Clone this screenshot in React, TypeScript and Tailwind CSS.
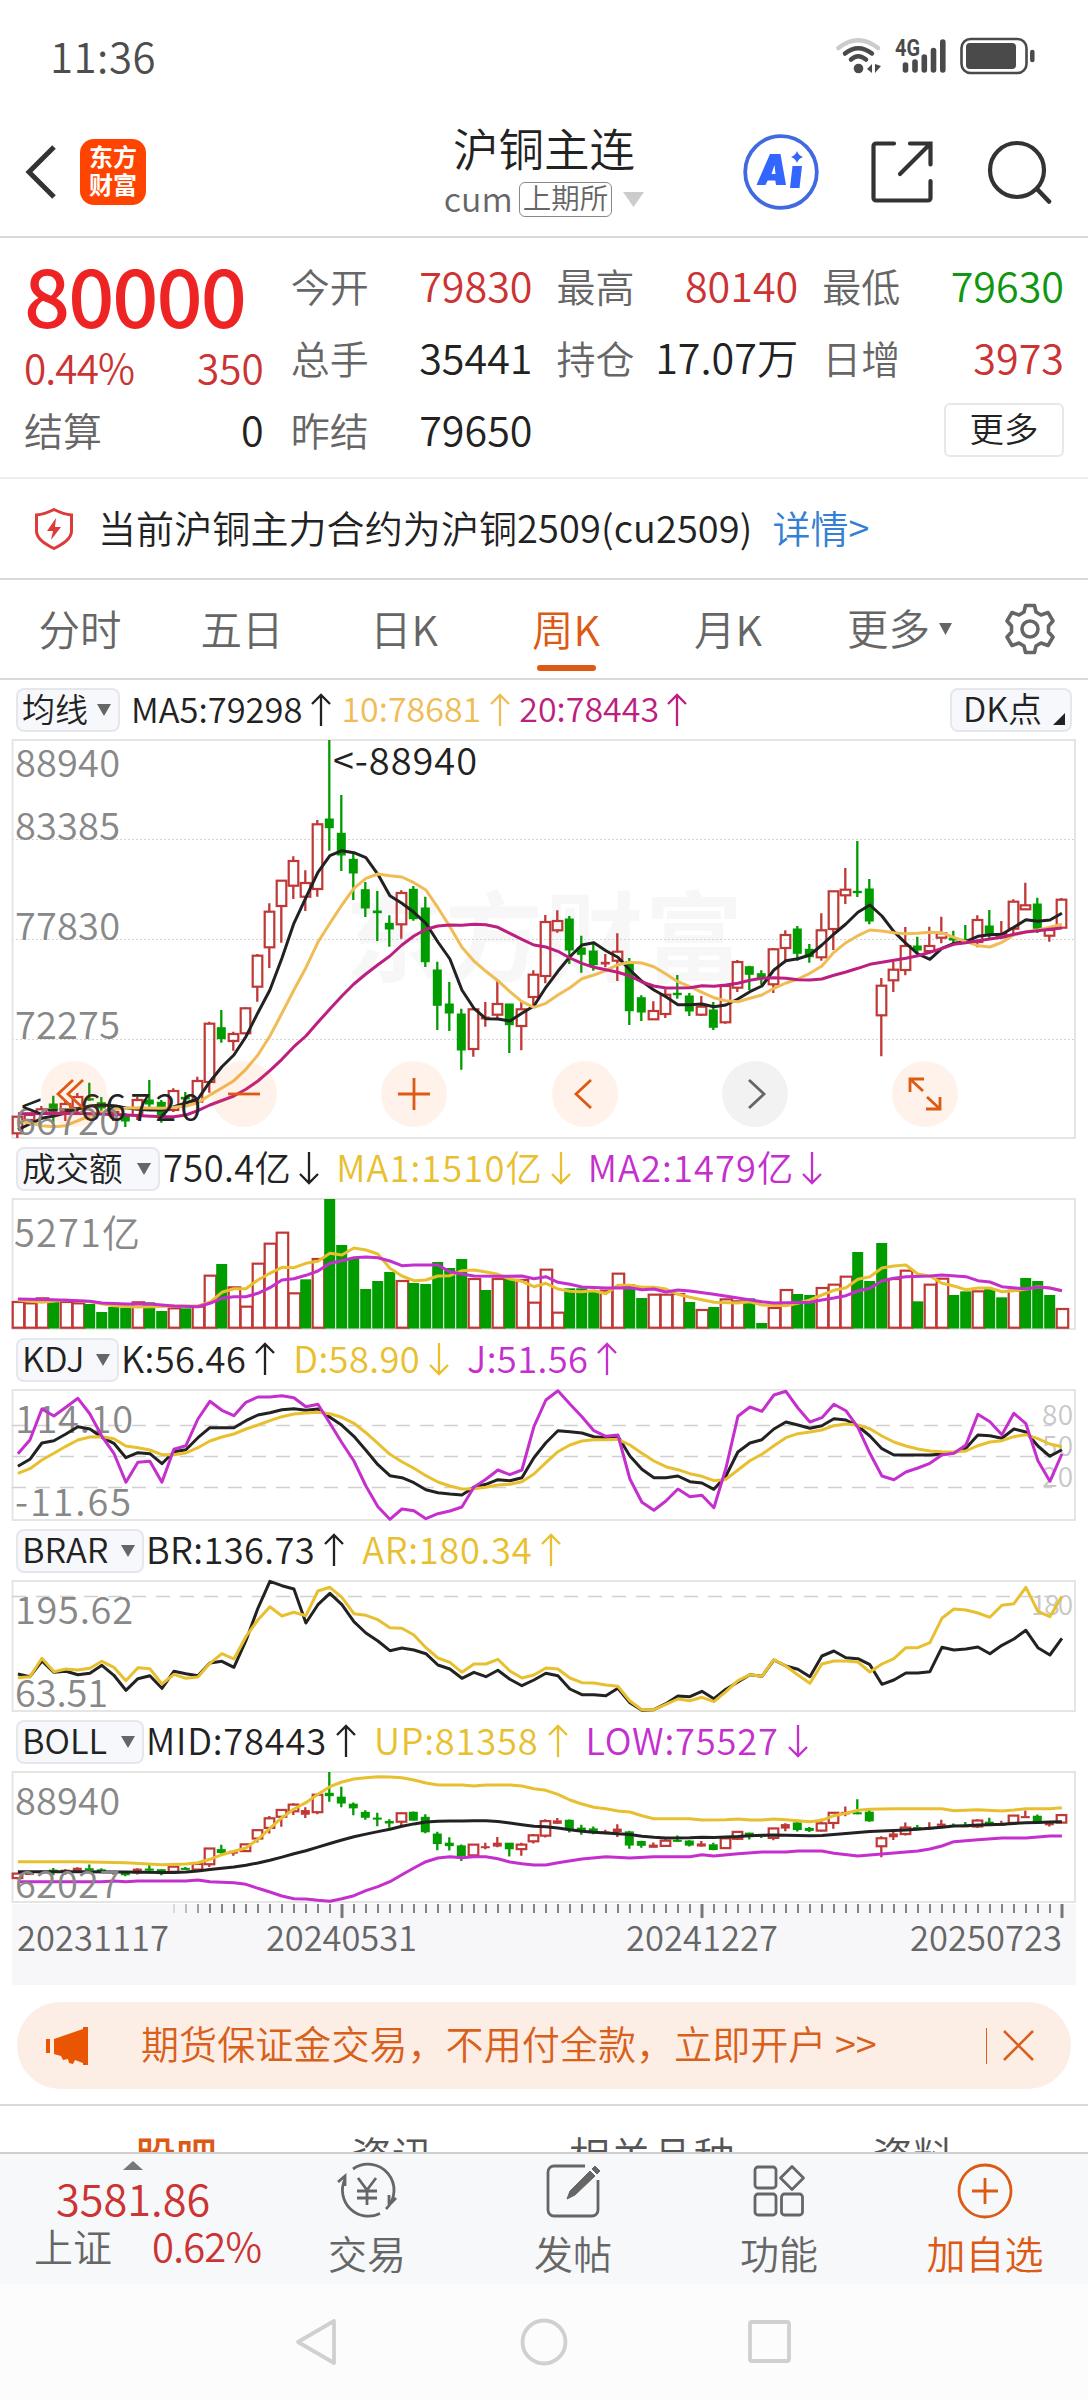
import type { ReactNode } from "react";

type Candle = [dir: "r" | "g", top: number, bottom: number, high: number, low: number];
type Series = number[] | [number, number][];

const RED = "#bf3836";
const GREEN = "#009c00";
const BLACK = "#222222";
const YELLOW = "#e8c02f";
const PURPLE = "#c42fce";
const FONT = '"Noto Sans CJK SC", sans-serif';

// offsets in px from the top of the K line panel
const candles: Candle[] = [
  ["r", 376.7, 393.3, 376, 398], ["r", 375, 380, 373, 382], ["r", 369.3, 373.3, 366, 377], ["g", 364, 371, 355.7, 383],
  ["r", 364, 371, 360, 381], ["r", 357, 368, 353, 373], ["g", 358.7, 360, 342.7, 361], ["g", 362.7, 368, 357, 373],
  ["r", 372, 375, 368, 381], ["g", 375, 381, 373, 387], ["r", 360, 375, 356.7, 380], ["g", 360, 364, 340, 370],
  ["g", 362.3, 376.7, 360, 382.7], ["r", 351, 370, 348.3, 372], ["g", 357.3, 359, 352, 362], ["r", 341, 361.7, 336.7, 364],
  ["r", 283.7, 342, 281.7, 352.7], ["g", 287.7, 298.7, 270, 302.7], ["r", 294, 301, 291.7, 310.7], ["r", 268.3, 293.3, 267.5, 294],
  ["r", 215.7, 246.7, 214, 261.7], ["r", 171.7, 207.3, 163.3, 228], ["r", 140.7, 166, 140, 202.7], ["r", 121, 145.7, 116.3, 159],
  ["r", 143, 156.7, 130.3, 171], ["r", 84.3, 149, 80, 156.7], ["g", 79, 87.7, 0, 110.7], ["g", 93.3, 115, 55, 131],
  ["g", 119.3, 133, 113.3, 160], ["g", 149.7, 168, 142, 177], ["g", 171, 172.7, 151, 201], ["g", 183.3, 189, 175.3, 206.7],
  ["r", 153, 184.3, 150.3, 198.7], ["g", 149.3, 178.7, 146, 180.7], ["g", 168, 221.7, 156.7, 227], ["g", 230, 265.3, 221.7, 290],
  ["g", 264, 273, 242, 291], ["g", 274, 310, 268.7, 329.7], ["r", 269.3, 309, 268, 316.7], ["r", 277, 279, 262, 286.7],
  ["r", 264, 274.7, 240.7, 278.7], ["g", 264, 284.7, 264, 313], ["r", 269.3, 286, 262, 310.3], ["r", 234.7, 257, 230.3, 265.3],
  ["r", 182, 236, 175, 243.3], ["r", 181, 190.3, 170.3, 192.7], ["g", 179, 210, 176, 224], ["g", 208, 214.3, 195.7, 232.7],
  ["g", 211, 224.7, 201.7, 230.7], ["r", 222.3, 224, 214, 227.3], ["r", 211.7, 220.7, 193.3, 241], ["g", 222, 270.7, 218, 285],
  ["g", 257.7, 272, 255.3, 281], ["r", 271, 279.3, 261.3, 280], ["r", 254.7, 274, 249.3, 278], ["g", 253.3, 254.7, 235, 258.7],
  ["g", 256, 271, 253, 276], ["r", 266.7, 274.7, 256, 276], ["g", 270, 287.3, 262, 290], ["r", 246, 282.3, 245, 283.7],
  ["r", 222, 247.7, 220, 252], ["g", 226.7, 234.3, 225.7, 250], ["g", 233.7, 238.3, 230.3, 244.7], ["r", 209.3, 244.3, 208, 253],
  ["r", 195, 208, 190.3, 220], ["g", 189, 213.3, 186, 220.7], ["g", 209.3, 216.7, 204, 222.7], ["r", 190.3, 217.3, 173.3, 220.7],
  ["r", 151.3, 189, 151, 210], ["r", 149.7, 155.3, 128, 164], ["g", 151.3, 152.7, 101, 157], ["g", 149, 181, 139, 184.3],
  ["r", 245.7, 275.3, 238, 316.3], ["r", 229.7, 240.3, 221.7, 252], ["r", 206, 230, 187, 235.3], ["g", 206, 210, 196.7, 215],
  ["r", 206, 211, 186.7, 214], ["r", 193.3, 197.7, 176.7, 203.3], ["g", 198, 200, 190.7, 203], ["g", 199.3, 200.7, 185, 203],
  ["r", 180, 202, 175.3, 207.3], ["g", 186, 195, 170, 198], ["r", 194, 197.3, 181, 199], ["r", 161.7, 188.7, 159.3, 195.3],
  ["r", 165.3, 169.3, 142.7, 170], ["g", 164, 188.3, 157.7, 193], ["r", 190, 195.7, 189, 201.7], ["r", 159.7, 187.7, 158, 188],
];

const ma5: Series = [
  389.7, 384, 378.3, 376, 373, 369, 366, 365, 365.7, 368, 369.3, 370, 370, 366.7, 363, 359, 341.7, 326.7, 315, 296.7, 272.7, 250,
  218.3, 183.3, 157.7, 132.3, 115.7, 110.7, 112.7, 117.7, 134.3, 155.7, 163.3, 172.3, 183.3, 202, 219, 250, 268.3, 278.7, 279, 281,
  273.3, 266, 247.3, 231.3, 216.7, 205, 202.7, 210.7, 217.3, 230, 241.3, 250, 256.7, 264.7, 264.7, 264, 266.7, 265, 259, 251.7,
  246, 230, 220.7, 218.7, 215, 205, 194, 184, 172.3, 165, 176, 191.7, 203.3, 214, 219.3, 208.3, 203.3, 201.7, 196.3, 194.7, 194.3,
  187.3, 179.7, 181.3, 180, 173.3,
];

const ma10: Series = [
  381, 383, 385.7, 386.7, 385.7, 380.7, 376, 371.7, 369.3, 368.3, 367.7, 368, 368.3, 367.3, 366, 362.7, 355, 348, 340.7, 329.3, 315,
  296, 273.3, 250, 227.7, 202.3, 183.3, 165, 148.3, 138.3, 134, 135.7, 137, 142.7, 150, 167.7, 186.7, 207.3, 221, 231.3, 240.7,
  251.7, 261.7, 267.3, 263.3, 255, 247.7, 238.7, 235, 230.7, 224.7, 222.3, 223, 226.7, 234, 241.7, 246.7, 252.3, 257.7, 260.7,
  261.7, 258.3, 255, 248.3, 243, 239, 233.3, 226, 212.3, 202.7, 195.7, 190, 191, 192.7, 193.7, 193.3, 192.3, 192.7, 197.3, 201.7,
  205.7, 207, 202.3, 195, 191.7, 190, 187.3, 184.3,
];

const ma20: [number, number][] = [
  [0, 373.7], [5, 373.3], [9, 375], [12, 376.7], [13, 376.7], [14, 375], [15, 370.7], [16, 365], [18, 356], [19, 349.3], [20, 341],
  [21, 330.7], [22, 319.3], [23, 306.7], [24, 296], [25, 282.3], [26, 269], [27, 256], [28, 244], [29, 234], [30, 224.7], [31, 216],
  [32, 205], [33, 196], [34, 189.3], [35, 186], [36, 185], [37, 185.3], [38, 184.3], [39, 184.7], [40, 187.3], [41, 193.3],
  [42, 199.3], [43, 205], [44, 207], [45, 211.3], [46, 218], [47, 223.3], [48, 227.3], [49, 229.7], [50, 232.3], [51, 236],
  [52, 242], [53, 246], [54, 248], [56, 247.7], [57, 245.7], [58, 246.3], [59, 245], [60, 243.3], [61, 240.3], [62, 238.3],
  [63, 237.7], [64, 238.3], [65, 239.7], [66, 240], [67, 239], [68, 235.3], [69, 232], [70, 228.3], [71, 224.3], [72, 222.3],
  [73, 220.3], [74, 218.3], [75, 215.7], [76, 212.3], [77, 208.3], [78, 204.3], [79, 202.7], [80, 200.7], [81, 199], [82, 197.3],
  [83, 194.3], [84, 192], [85, 190.7], [86, 189.3], [87, 188],
];

// tops of the volume bars; the base line is 565
const volume =
  "r486 r490 r475 g486 r486 r490 g492 g516 g501 g503 r487 g487 g513 r505 g505 r500 r407 g372 r442 r500 r371 r311 r278 r460 g418 r357 g177 g315 g354 g447 g423 g396 r423 g429 g432 g366 g384 g357 r417 g450 r417 g417 r420 r488 r389 r518 g445 g445 g452 r452 r401 g433 g474 r464 r464 r462 g486 r510 g501 r478 r484 g475 g549 r504 r450 g462 g465 r444 r434 r410 g336 g423 g309 r417 r392 g484 r434 r416 g465 g454 r454 g447 g472 r452 g414 g423 g465 r507".split(" ");

const volMa1: Series = [
  [0, 480], [2, 487], [4, 480], [6, 485], [8, 497], [10, 501], [11, 500], [13, 498], [15, 498], [16, 487], [17, 457], [18, 446],
  [19, 446], [20, 420], [21, 400], [22, 382], [23, 383], [24, 370], [25, 364], [26, 340], [27, 345], [28, 324], [29, 330], [30, 342],
  [31, 385], [32, 408], [33, 422], [34, 420], [35, 408], [36, 407], [37, 392], [38, 390], [39, 396], [40, 403], [41, 417], [42, 424],
  [43, 440], [44, 430], [45, 447], [46, 454], [47, 455], [48, 452], [49, 461], [50, 436], [51, 436], [52, 442], [53, 442], [54, 447],
  [55, 463], [56, 472], [57, 479], [58, 487], [60, 489], [61, 485], [62, 495], [64, 497], [65, 490], [66, 480], [67, 465], [68, 451],
  [69, 443], [70, 418], [71, 410], [72, 384], [73, 378], [74, 375], [75, 402], [76, 408], [77, 430], [78, 438], [79, 449], [80, 444],
  [81, 444], [82, 455], [83, 452], [84, 448], [85, 440], [86, 444], [87, 452],
];

const volMa2: Series = [
  [0, 477], [3, 479], [6, 484], [7, 489], [9, 492], [11, 492], [13, 498], [15, 500], [16, 490], [17, 475], [18, 470], [19, 470],
  [20, 460], [21, 443], [22, 420], [23, 416], [24, 406], [25, 393], [26, 370], [27, 362], [28, 353], [29, 351], [30, 353], [31, 363],
  [32, 377], [33, 375], [35, 375], [36, 395], [37, 402], [38, 408], [40, 409], [42, 408], [43, 416], [44, 410], [45, 427], [46, 433],
  [47, 441], [49, 444], [51, 443], [52, 449], [53, 447], [54, 456], [55, 450], [56, 453], [58, 463], [60, 474], [62, 485], [63, 489],
  [66, 487], [67, 480], [68, 474], [69, 467], [70, 453], [71, 445], [72, 423], [73, 415], [74, 410], [76, 408], [77, 405], [79, 410],
  [80, 422], [81, 426], [82, 440], [84, 447], [85, 441], [86, 444], [87, 452],
];

const kLine: Series = [
  979, 958, 909, 902, 882, 860, 867, 892, 910, 953, 938, 941, 971, 935, 929, 893, 863, 863, 863, 842, 825, 818, 809, 806, 811, 807,
  832, 856, 889, 931, 974, 1007, 1013, 1028, 1049, 1058, 1062, 1065, 1042, 1033, 1019, 1022, 1013, 953, 908, 872, 875, 879, 890,
  893, 889, 948, 988, 1013, 1013, 1008, 1025, 1029, 1048, 1008, 936, 909, 899, 867, 846, 855, 865, 857, 836, 840, 858, 888, 926,
  945, 945, 945, 945, 942, 938, 925, 885, 887, 895, 867, 876, 918, 949, 929,
];

const dLine: Series = [
  1000, 986, 960, 940, 919, 900, 891, 890, 896, 918, 923, 930, 944, 944, 939, 923, 903, 891, 882, 867, 855, 842, 830, 822, 819, 817,
  821, 832, 850, 878, 910, 943, 965, 985, 1007, 1026, 1038, 1047, 1046, 1042, 1035, 1033, 1025, 1002, 968, 935, 915, 903, 899, 899,
  898, 915, 940, 963, 980, 989, 1001, 1009, 1022, 1018, 990, 962, 943, 917, 893, 881, 876, 870, 857, 852, 855, 866, 888, 906, 918,
  927, 933, 935, 936, 933, 917, 906, 902, 890, 884, 896, 912, 920,
];

const jLine: Series = [
  941, 900, 807, 828, 802, 775, 822, 889, 940, 1027, 967, 964, 1027, 928, 917, 837, 784, 811, 827, 787, 771, 771, 767, 773, 800, 793,
  850, 908, 963, 1038, 1100, 1138, 1107, 1112, 1136, 1121, 1113, 1101, 1042, 1018, 990, 1004, 990, 860, 780, 752, 792, 830, 872,
  889, 885, 1017, 1087, 1111, 1083, 1047, 1070, 1066, 1103, 985, 829, 801, 814, 765, 754, 804, 846, 833, 793, 812, 862, 940, 1008,
  1019, 996, 984, 970, 945, 940, 915, 823, 845, 884, 820, 851, 962, 1024, 942,
];

const brLine: Series = [
  462, 470, 423, 457, 454, 464, 460, 436, 466, 511, 476, 467, 505, 454, 461, 467, 429, 424, 442, 362, 265, 184, 197, 207, 309, 254,
  220, 254, 305, 339, 363, 392, 384, 390, 401, 435, 447, 475, 457, 470, 451, 478, 497, 480, 460, 467, 507, 524, 524, 527, 505, 548,
  571, 569, 551, 528, 530, 514, 536, 508, 486, 464, 469, 420, 438, 448, 470, 408, 393, 413, 416, 434, 493, 480, 459, 459, 455, 382,
  390, 387, 381, 401, 376, 357, 331, 383, 405, 355,
];

const arLine: Series = [
  473, 470, 415, 455, 447, 450, 445, 424, 442, 482, 443, 446, 492, 463, 475, 471, 430, 401, 417, 350, 300, 260, 288, 277, 287, 213,
  202, 232, 281, 286, 299, 323, 325, 345, 383, 414, 427, 457, 432, 432, 418, 453, 474, 465, 444, 447, 474, 488, 489, 495, 499, 543,
  569, 569, 553, 537, 542, 532, 545, 515, 482, 464, 469, 419, 438, 465, 490, 432, 423, 423, 426, 456, 432, 416, 383, 383, 368, 295,
  267, 270, 279, 292, 256, 251, 202, 274, 290, 229,
];

const upLine: Series = [
  [0, 1025], [5, 1025], [9, 1028], [12, 1034], [14, 1032], [15, 1028], [16, 1018], [17, 1004], [18, 994], [19, 984], [20, 958],
  [21, 925], [22, 893], [23, 867], [24, 848], [25, 823], [26, 800], [27, 786], [28, 777], [29, 773], [30, 770], [31, 771], [32, 773],
  [33, 780], [34, 789], [35, 795], [37, 795], [38, 798], [39, 795], [41, 795], [42, 798], [43, 806], [44, 811], [45, 823], [46, 840],
  [47, 852], [48, 862], [49, 866], [50, 873], [51, 876], [52, 887], [53, 896], [56, 896], [57, 900], [59, 899], [60, 897], [61, 900],
  [62, 900], [63, 897], [64, 899], [66, 905], [67, 901], [68, 887], [69, 880], [70, 871], [71, 868], [73, 866], [77, 866], [78, 872],
  [80, 869], [82, 873], [83, 870], [84, 866], [86, 866], [87, 863],
];

const lowLine: Series = [
  [0, 1085], [7, 1085], [8, 1083], [9, 1085], [10, 1083], [14, 1083], [15, 1080], [16, 1085], [18, 1088], [19, 1093], [20, 1105],
  [21, 1116], [22, 1128], [23, 1136], [24, 1137], [25, 1141], [26, 1144], [27, 1136], [28, 1127], [29, 1112], [30, 1100], [31, 1085],
  [32, 1064], [33, 1044], [34, 1025], [35, 1014], [36, 1010], [37, 1013], [38, 1010], [39, 1010], [40, 1016], [41, 1026], [42, 1031],
  [43, 1035], [44, 1035], [45, 1028], [47, 1017], [49, 1010], [51, 1014], [53, 1010], [56, 1010], [57, 1004], [58, 1008], [60, 1001],
  [62, 996], [64, 996], [65, 993], [67, 993], [68, 1000], [70, 1008], [72, 1002], [75, 993], [76, 987], [77, 978], [78, 965],
  [80, 959], [82, 954], [84, 954], [86, 948], [87, 948],
];

const xAt = (i: number) => 17.3 + 12 * i;

const Line = ({ data, color, y }: { data: Series; color: string; y: (v: number) => number }) => {
  const points = data.map((p, i) => {
    const [idx, v] = typeof p === "number" ? [i, p] : p;
    return `${xAt(idx + 0.05).toFixed(1)},${y(v).toFixed(1)}`;
  });
  return <polyline points={points.join(" ")} fill="none" stroke={color} strokeWidth="3" strokeLinejoin="round" />;
};

const Frame = ({ height }: { height: number }) => (
  <rect x="12.5" y="0" width="1062.5" height={height} fill="none" stroke="#e3e3e3" strokeWidth="1.8" />
);

interface LabelProps {
  x: number;
  y: number;
  width: number;
  size?: number;
  color?: string;
  children: string;
}

const Label = ({ x, y, width, size = 38, color = "#888888", children }: LabelProps) => (
  <text x={x} y={y} textLength={width} fontSize={size} fill={color} fontFamily={FONT}>
    {children}
  </text>
);

const Candles = ({ ratio, min }: { ratio: number; min: number }) => (
  <g>
    {candles.map(([dir, top, bottom, high, low], i) => {
      const x = xAt(i);
      const t = top * ratio;
      const h = (bottom - top) * ratio;
      const color = dir === "r" ? RED : GREEN;
      const solid = dir === "g" || h < min;
      return (
        <g key={i}>
          <path d={`M${x} ${high * ratio}V${t}M${x} ${t + h}V${low * ratio}`} stroke={color} strokeWidth="2.3" />
          {solid
            ? <rect x={x - 4.5} y={t - 0.5} width="9" height={Math.max(h, 1) + 1} fill={color} />
            : <rect x={x - 4.6} y={t} width="9.6" height={h} fill="none" stroke={color} strokeWidth="2.2" />}
        </g>
      );
    })}
  </g>
);

const Arrow = ({ down }: { down?: boolean }) => (
  <svg width="20" height="34" viewBox="0 0 20 34" fill="none" stroke="currentColor" strokeWidth="2.3" className="shrink-0">
    <path d={down ? "M10 1v31M1 23l9 9 9-9" : "M10 33V2M1 11l9-9 9 9"} />
  </svg>
);

const Picker = ({ label, className }: { label: string; className: string }) => (
  <button className={"flex h-[44px] items-center justify-between rounded-lg border-2 border-[#e6e7ec] bg-[#f7f8fb] pr-[7px] pl-[4px] leading-none tracking-normal text-[#222222] " + className}>
    <span className="pb-[4px]">{label}</span>
    <svg width="14" height="12" viewBox="0 0 14 12"><path d="M0 0h14L7 12z" fill="#666666" /></svg>
  </button>
);

const Value = ({ className, down, children }: { className: string; down?: boolean; children: ReactNode }) => (
  <span className={"flex items-center " + className}>
    <span className="pb-[4px]">{children}</span>
    <Arrow down={down} />
  </span>
);

const PanelHead = ({ children }: { children: ReactNode }) => (
  <div className="flex h-[61px] items-center pl-[16px] text-[36.300px] leading-none tracking-[0.400px]">{children}</div>
);

const Stat = ({ label, value, color }: { label: string; value: string; color: string }) => (
  <div className="flex h-[72px] items-center justify-between">
    <span className="text-[39px] text-[#666666]">{label}</span>
    <span className={"text-[41.300px] " + color}>{value}</span>
  </div>
);

const StatusBar = () => (
  <div className="flex h-[100px] items-center justify-between pt-[14px] pr-[53px] pl-[50px]">
    <span className="pb-[5px] text-[42px] leading-none tracking-[0.500px] text-[#4d4d4d]">11:36</span>
    <svg width="202" height="40" viewBox="0 0 202 40" fill="none" strokeLinecap="round">
      <path d="M5.500 11Q25 -4.500 45 11" stroke="#cccccc" strokeWidth="4.500" />
      <path d="M12 16.500Q25 6 39 16.500" stroke="#4a4a4a" strokeWidth="4.500" />
      <path d="M18 22.500Q25 16 33 22.500" stroke="#4a4a4a" strokeWidth="4.500" />
      <circle cx="25.500" cy="31.500" r="4.800" fill="#4a4a4a" />
      <path d="M39 27v9l-5-4zM42 27v9l6-7z" fill="#4a4a4a" />
      <text x="62" y="18.500" fontSize="23" fontWeight="700" fill="#4a4a4a" textLength="25" lengthAdjust="spacingAndGlyphs" fontFamily="Roboto, sans-serif">4G</text>
      <path d="M72.500 28v5M82 25v8M91.300 20v13M100.500 13.500v19.500M109.800 5v28" stroke="#4a4a4a" strokeWidth="5.600" />
      <rect x="128.500" y="2" width="65" height="34" rx="9" stroke="#4a4a4a" strokeWidth="2.600" />
      <rect x="133" y="6" width="50" height="26" rx="4" fill="#4a4a4a" />
      <path d="M199.300 15v8" stroke="#4a4a4a" strokeWidth="4.500" />
    </svg>
  </div>
);

const TitleBar = () => (
  <header className="flex h-[138px] items-center justify-between border-b-2 border-[#d9d9d9] pr-[36px] pb-[1px] pl-[24px]">
    <div className="flex w-[412px] items-center gap-[24px] pt-[8px]">
      <svg width="32" height="54" viewBox="0 0 32 54" fill="none" stroke="#333333" strokeWidth="5">
        <path d="M30 2L5 27l25 25" />
      </svg>
      <div className="grid h-[66px] w-[66px] place-content-center rounded-[14px] bg-[#ff4400] pb-[3px] text-center text-[24px] leading-[28px] font-bold text-white">
        <div>东方</div>
        <div>财富</div>
      </div>
    </div>
    <div className="flex flex-col items-center">
      <h1 className="text-[45.500px] leading-[60px] text-[#222222]">沪铜主连</h1>
      <div className="flex h-[42px] items-center pt-[3px] text-[#666666]">
        <span className="pb-[3px] text-[34px] leading-none">cum</span>
        <span className="mr-[11px] ml-[6px] flex h-[35px] items-center rounded-md border-[1.500px] border-[#888888] px-[3px] pb-[3px] text-[28.500px] leading-none">上期所</span>
        <svg width="21" height="15" viewBox="0 0 21 15"><path d="M0 0h21L10.500 15z" fill="#cccccc" /></svg>
      </div>
    </div>
    <div className="flex w-[400px] items-center justify-end pt-[8px]">
      <svg width="76" height="76" viewBox="0 0 76 76">
        <circle cx="38" cy="38" r="35.800" fill="none" stroke="#4169e1" strokeWidth="3.800" />
        <path d="M27 20h10.500l5.500 31h-10l-.7-4.500h-7.600L22.500 51H13.500zM31.500 31l-3 9h4z" fill="#3366ff" fillRule="evenodd" />
        <path d="M49.500 32h9.500l-2.500 22h-9.500z" fill="#3366ff" />
        <path d="M54 17q1.500 4.500 6 6-4.500 1.500-6 6-1.500-4.500-6-6 4.500-1.500 6-6z" fill="#3366ff" />
      </svg>
      <svg width="64" height="64" viewBox="0 0 64 64" fill="none" stroke="#333333" strokeWidth="4.200" strokeLinecap="round" className="ml-[51px]">
        <path d="M24 3.500H6a2.500 2.500 0 0 0-2.500 2.500v52a2.500 2.500 0 0 0 2.500 2.500h52a2.500 2.500 0 0 0 2.500-2.500V41M40 3.500h20.500v21M60 4L30 34" />
      </svg>
      <svg width="66" height="66" viewBox="0 0 66 66" fill="none" stroke="#333333" strokeWidth="4.200" strokeLinecap="round" className="ml-[52px]">
        <circle cx="31" cy="31" r="27" />
        <path d="M51 50l12 12.500" strokeWidth="4.600" />
      </svg>
    </div>
  </header>
);

const Quote = () => (
  <section className="flex h-[241px] border-b-2 border-[#eeeeee] pt-[11px] pr-[24px] pl-[24px] leading-none">
    <div className="w-[240px]">
      <div className="h-[87px] text-[81px] leading-[88px] font-medium tracking-[-2px] text-[#ee2424]">80000</div>
      <div className="flex h-[62px] items-center justify-between pt-[1px] text-[40.500px] text-[#cc3333]">
        <span className="tracking-[-0.900px]">0.44%</span>
        <span>350</span>
      </div>
      <div className="-mt-[5px]">
        <Stat label="结算" value="0" color="text-[#222222]" />
      </div>
    </div>
    <div className="ml-[27px] w-[242px]">
      <Stat label="今开" value="79830" color="text-[#cc3333]" />
      <Stat label="总手" value="35441" color="text-[#222222]" />
      <Stat label="昨结" value="79650" color="text-[#222222]" />
    </div>
    <div className="ml-[24px] w-[242px]">
      <Stat label="最高" value="80140" color="text-[#cc3333]" />
      <Stat label="持仓" value="17.07万" color="text-[#222222]" />
    </div>
    <div className="ml-[24px] w-[242px]">
      <Stat label="最低" value="79630" color="text-[#109610]" />
      <Stat label="日增" value="3973" color="text-[#cc3333]" />
      <button className="mt-[10px] ml-auto flex h-[54px] w-[120px] items-center justify-center rounded-md border-2 border-[#e8e8e8] pb-[6px] text-[34.500px] text-[#222222]">更多</button>
    </div>
  </section>
);

const Notice = () => (
  <section className="flex h-[101px] items-center border-b-2 border-[#d9d9d9] pl-[34px] text-[38px] leading-none text-[#222222]">
    <svg width="40" height="44" viewBox="0 0 40 44" fill="none" stroke="#dd3a3a" strokeWidth="3">
      <path d="M20 2.500C15 5 9 7.500 2.500 8v16c0 8 9 13 17.500 17.500C28.500 37 37.500 32 37.500 24V8C31 7.500 25 5 20 2.500z" />
      <path d="M22 11l-9 13h6l-2 9 10-13h-6z" fill="#dd3a3a" stroke="none" />
    </svg>
    <span className="ml-[24px] pb-[4px] tracking-[0.100px]">当前沪铜主力合约为沪铜2509(cu2509)</span>
    <a className="ml-[20px] pb-[4px] text-[#3580d2]">详情&gt;</a>
  </section>
);

const periods = ["分时", "五日", "日K", "周K", "月K"];

const PeriodTabs = () => (
  <nav className="flex h-[100px] items-center border-b-2 border-[#d9d9d9] text-[41.500px] leading-none text-[#666666]">
    {periods.map((name) => (
      <div key={name} className={name === "周K" ? "flex h-full w-[162px] flex-col items-center pt-[28px] pr-[2px] text-[#dd5a14]" : "flex h-full w-[162px] flex-col items-center pt-[28px] pr-[2px]"}>
        {name}
        {name === "周K" && <span className="mt-[15px] h-[6px] w-[59px] rounded-full bg-[#dd5a14]" />}
      </div>
    ))}
    <div className="ml-[37px] flex items-center gap-[9px]">
      <span className="pb-[2px]">更多</span>
      <svg width="13" height="12" viewBox="0 0 14 13"><path d="M0 0h14L7 13z" fill="#666666" /></svg>
    </div>
    <svg width="52" height="52" viewBox="0 0 52 52" fill="none" stroke="#666666" strokeWidth="3.600" strokeLinejoin="round" className="ml-[52px]">
      <path d="M21.500 2.500h9l1.500 6.500 5 3 7-2.500 5 8.500-4.500 5v6l4.500 5-5 8.500-7-2.500-5 3-1.500 6.500h-9l-1.500-6.500-5-3-7 2.500-5-8.500 4.500-5v-6l-4.500-5 5-8.500 7 2.500 5-3z" />
      <circle cx="26" cy="26" r="8" />
    </svg>
  </nav>
);

const controls = [
  "M32 -14L17 0l15 14M42 -14L27 0l15 14",
  "M17 0h32",
  "M17 0h32M33 -16v32",
  "M39 -14L24 0l15 14",
  "M27 -14l15 14-15 14",
  "M18 -2V-15h14M18 -15l13 12M48 3v12H34M48 15L35 3",
];

const KLineChart = () => {
  const same = (v: number) => v;
  return (
    <div className="relative h-[398px]">
      <svg width="1088" height="398" className="block overflow-visible">
        <text x="345" y="234" fontSize="98" fontWeight="700" fill="#f7f7f7" textLength="398" fontFamily={FONT}>东方财富</text>
        <path d="M12 99.500h1063M12 199.500h1063M12 299.500h1063" stroke="#d4d4d4" strokeWidth="1.200" strokeDasharray="2 2" />
        <Frame height={398} />
        <Candles ratio={1} min={2.5} />
        <Line data={ma5} color={BLACK} y={same} />
        <Line data={ma10} color="#efbc55" y={same} />
        <Line data={ma20} color="#bd1f80" y={same} />
        <Label x={15} y={37} width={105}>88940</Label>
        <Label x={15} y={99.5} width={105}>83385</Label>
        <Label x={15} y={199.5} width={105}>77830</Label>
        <Label x={15} y={299} width={105}>72275</Label>
        <Label x={15} y={395} width={105}>66720</Label>
        <Label x={333} y={34.5} width={144} color={BLACK}>{"<-88940"}</Label>
        <Label x={21} y={381} width={180} color={BLACK}>{"<--66720"}</Label>
      </svg>
      <div className="absolute top-[321px] left-[41px] flex gap-[104.2px]">
        {controls.map((d, i) => (
          <button key={i} className={i === 4 ? "h-[66px] w-[66px] rounded-full bg-black/5 text-[#666666]" : "h-[66px] w-[66px] rounded-full bg-[#ff6a14]/9 text-[#dd5a14]"}>
            <svg width="66" height="66" viewBox="0 -33 66 66" fill="none" stroke="currentColor" strokeWidth="2.800">
              <path d={d} />
            </svg>
          </button>
        ))}
      </div>
    </div>
  );
};

const VolumeChart = () => {
  const y = (v: number) => (v - 177) / 3;
  return (
    <svg width="1088" height="130" className="block overflow-visible">
      <Frame height={130} />
      {volume.map((bar, i) => {
        const top = y(Number(bar.slice(1)));
        const x = 12.2 + 12 * i;
        return bar[0] === "g"
          ? <rect key={i} x={x} y={top} width="11" height={129.5 - top} fill={GREEN} />
          : <rect key={i} x={x + 0.5} y={top} width="11.500" height={128.7 - top} fill="#ffffff" stroke={RED} strokeWidth="2.200" />;
      })}
      <Line data={volMa1} color={YELLOW} y={y} />
      <Line data={volMa2} color={PURPLE} y={y} />
      <Label x={14} y={48} width={126}>5271亿</Label>
    </svg>
  );
};

const KdjChart = () => {
  const y = (v: number) => (v - 750) / 3;
  return (
    <svg width="1088" height="130" className="block overflow-visible">
      <Frame height={130} />
      <path d="M12 35.500h1040M12 66.500h1040M12 97.500h1040" stroke="#d0d0d0" strokeWidth="1.400" strokeDasharray="14 10" />
      <Label x={15} y={43} width={118}>114.10</Label>
      <Label x={15} y={126} width={116}>-11.65</Label>
      <Label x={1042} y={34.5} width={31} size={28} color="#c8c8c8">80</Label>
      <Label x={1042} y={66} width={31} size={28} color="#c8c8c8">50</Label>
      <Label x={1042} y={97} width={31} size={28} color="#c8c8c8">20</Label>
      <Line data={kLine} color={BLACK} y={y} />
      <Line data={dLine} color={YELLOW} y={y} />
      <Line data={jLine} color={PURPLE} y={y} />
    </svg>
  );
};

const BrarChart = () => {
  const y = (v: number) => (v - 183) / 3;
  return (
    <svg width="1088" height="130" className="block overflow-visible">
      <Frame height={130} />
      <path d="M12 15.500h1040" stroke="#d0d0d0" strokeWidth="1.400" strokeDasharray="14 10" />
      <Label x={1031} y={34} width={42} size={28} color="#c8c8c8">180</Label>
      <Line data={brLine} color={BLACK} y={y} />
      <Line data={arLine} color={YELLOW} y={y} />
      <Label x={15} y={43} width={118}>195.62</Label>
      <Label x={15} y={126} width={93}>63.51</Label>
    </svg>
  );
};

const BollChart = () => {
  const y = (v: number) => (v - 756) / 3;
  const ratio = 0.2697;
  return (
    <svg width="1088" height="130" className="block overflow-visible">
      <Frame height={130} />
      <Candles ratio={ratio} min={4.2} />
      <Line data={ma20} color={BLACK} y={(v) => v * ratio - 1} />
      <Line data={upLine} color={YELLOW} y={y} />
      <Line data={lowLine} color={PURPLE} y={y} />
      <Label x={15} y={43} width={105}>88940</Label>
      <Label x={15} y={126} width={105}>62027</Label>
    </svg>
  );
};

const TimeAxis = () => (
  <svg width="1064" height="81" className="mt-[2px] ml-[12px] block bg-[#f7f7fa]">
    {candles.map((_, i) => {
      const major = i === 27 || i === 57 || i === 87;
      const opacity = i < 13 ? 0 : i < 16 ? 0.25 * (i - 12) : 1;
      return <path key={i} d={`M${6 + 12 * i} 0v${major ? 14 : 9}`} stroke="#777777" strokeWidth={major ? 3 : 1.8} opacity={opacity} />;
    })}
    <Label x={5} y={47} width={152} size={34.5} color="#666666">20231117</Label>
    <Label x={254} y={47} width={151} size={34.5} color="#666666">20240531</Label>
    <Label x={614} y={47} width={152} size={34.5} color="#666666">20241227</Label>
    <Label x={898} y={47} width={152} size={34.5} color="#666666">20250723</Label>
  </svg>
);

const Banner = () => (
  <div className="mx-[17px] mt-[17px] flex h-[87px] items-center rounded-full bg-[#fdeee5] pr-[36px] pl-[28px] text-[38.100px] leading-none text-[#d95f1c]">
    <svg width="46" height="40" viewBox="0 0 46 40" fill="#ea5504">
      <path d="M1 13h4v14H1zM9 13L38 3V1h5v38h-5v-2l-8-3-2 4-4-1-1-4-5 1-2-4-7-2z" />
    </svg>
    <span className="ml-[50px] pb-[5px] whitespace-pre">期货保证金交易，不用付全款，立即开户 &gt;&gt;</span>
    <span className="ml-auto h-[36px] w-[1.500px] bg-[#d95f1c]" />
    <svg width="33" height="33" viewBox="0 0 33 33" fill="none" stroke="#d95f1c" strokeWidth="2.600" className="ml-[15px]">
      <path d="M2 2l29 29M31 2L2 31" />
    </svg>
  </div>
);

const ContentTabs = () => (
  <div className="mt-[15px] flex h-[48px] overflow-hidden border-t-2 border-[#d9d9d9] pt-[28px] pl-[135px] text-[41px] leading-none text-[#555555]">
    <span className="font-medium text-[#dd5a14]">股吧</span>
    <span className="ml-[134px]">资讯</span>
    <span className="ml-[136px] tracking-[0.500px]">相关品种</span>
    <span className="ml-[137px]">资料</span>
  </div>
);

const Action = ({ label, className, children }: { label: string; className?: string; children: ReactNode }) => (
  <button className={"flex w-[206px] flex-col items-center text-[39px] leading-none " + (className ?? "text-[#666666]")}>
    <svg width="64" height="60" viewBox="-32 -30 64 60" fill="none" stroke="currentColor" strokeWidth="2.800">{children}</svg>
    <span className="mt-[12px]">{label}</span>
  </button>
);

const BottomBar = () => (
  <footer className="flex h-[132px] border-t-2 border-[#cfcfcf] bg-[#f7f8fa]">
    <div className="w-[265px] leading-none text-[#cc3333]">
      <svg width="20" height="9" viewBox="0 0 20 9" className="mt-[7px] ml-[123px]"><path d="M10 0l10 9H0z" fill="#777777" /></svg>
      <div className="mt-[4px] ml-[56px] h-[51px] pt-[2px] text-[43.300px]">3581.86</div>
      <div className="ml-[34px] flex items-center text-[39px]">
        <span className="text-[#666666]">上证</span>
        <span className="ml-[40px] text-[40px] tracking-[-0.800px]">0.62%</span>
      </div>
    </div>
    <div className="flex pt-[7px]">
      <Action label="交易">
        <path d="M-14 -22A26 26 0 0 1 19 18M13 22.500A26 26 0 0 1 -22 -12M-29 -9l7 -6v10M29 7l-7 7v-10M-9 -13l9 12 9 -12M0 -1v15M-10 0h20M-10 7h20" />
      </Action>
      <Action label="发帖">
        <path d="M12 -25h-31a6 6 0 0 0-6 6v38a6 6 0 0 0 6 6h38a6 6 0 0 0 6-6v-30" />
        <path d="M-6 8l3 -8L17 -20l5 5L2 4zM19 -22l3 -3 5 5-3 3z" fill="currentColor" strokeWidth="1" />
      </Action>
      <Action label="功能">
        <rect x="-24" y="-24" width="21" height="21" rx="3" />
        <rect x="-24" y="3" width="21" height="21" rx="3" />
        <rect x="2.500" y="3" width="21" height="21" rx="3" />
        <path d="M13 -24.500l11.500 11.500-11.500 11.500L1.500 -13z" strokeLinejoin="round" />
      </Action>
      <Action label="加自选" className="text-[#dd5a14]">
        <circle r="26" />
        <path d="M-13 0h26M0 -13v26" />
      </Action>
    </div>
  </footer>
);

const NavBar = () => (
  <div className="flex h-[116px] items-center justify-center bg-[#fcfcfc] text-[#d0d0d0]">
    <svg width="500" height="50" viewBox="0 0 500 50" fill="none" stroke="currentColor" strokeWidth="3.800" strokeLinejoin="round">
      <path d="M40 4v42L4 25z" />
      <circle cx="250" cy="25" r="21.500" />
      <rect x="456" y="5" width="39" height="39" rx="2" />
    </svg>
  </div>
);

export default function App() {
  return (
    <main className="flex h-[2400px] w-[1088px] flex-col overflow-hidden bg-white font-['Noto_Sans_CJK_SC',sans-serif] font-[350]">
      <StatusBar />
      <TitleBar />
      <Quote />
      <Notice />
      <PeriodTabs />

      <div className="flex h-[60px] items-center pr-[16px] pl-[16px] text-[34px] leading-none">
        <Picker label="均线" className="w-[104px] text-[33px]" />
        <Value className="ml-[11px] gap-[9px] text-[#222222]"><span className="text-[34.5px]">MA5:79298</span></Value>
        <Value className="ml-[10px] gap-[9px] text-[#efbc55]">10:78681</Value>
        <Value className="ml-[9px] gap-[8px] text-[#bd1f80]">20:78443</Value>
        <button className="ml-auto flex h-[44px] w-[122px] items-center rounded-lg border-2 border-[#e6e7ec] bg-[#f7f8fb] pr-[5px] pl-[11px] text-[#222222]">
          <span className="pb-[4px]">DK点</span>
          <svg width="12" height="12" viewBox="0 0 12 12" className="mt-auto mb-[5px] ml-auto"><path d="M12 0v12H0z" fill="#222222" /></svg>
        </button>
      </div>
      <KLineChart />

      <PanelHead>
        <Picker label="成交额" className="w-[144px] text-[33.5px]" />
        <Value down className="ml-[3px] gap-[8px] text-[#222222]">750.4亿</Value>
        <Value down className="ml-[17px] gap-[8px] tracking-[1.1px] text-[#e8c02f]">MA1:1510亿</Value>
        <Value down className="ml-[17px] gap-[8px] tracking-[1.1px] text-[#c42fce]">MA2:1479亿</Value>
      </PanelHead>
      <VolumeChart />

      <PanelHead>
        <Picker label="KDJ" className="w-[103px] text-[34.5px]" />
        <Value className="ml-[2px] gap-[9px] text-[#222222]">K:56.46</Value>
        <Value down className="ml-[18px] gap-[9px] text-[#e8c02f]">D:58.90</Value>
        <Value className="ml-[18px] gap-[9px] text-[#c42fce]">J:51.56</Value>
      </PanelHead>
      <KdjChart />

      <PanelHead>
        <Picker label="BRAR" className="w-[128px] text-[34.5px]" />
        <Value className="ml-[2px] gap-[9px] text-[#222222]">BR:136.73</Value>
        <Value className="ml-[18px] gap-[9px] tracking-[0.7px] text-[#e8c02f]">AR:180.34</Value>
      </PanelHead>
      <BrarChart />

      <PanelHead>
        <Picker label="BOLL" className="w-[128px] text-[34.5px]" />
        <Value className="ml-[2px] gap-[9px] tracking-[0.8px] text-[#222222]">MID:78443</Value>
        <Value className="ml-[18px] gap-[9px] tracking-[0.8px] text-[#e8c02f]">UP:81358</Value>
        <Value down className="ml-[18px] gap-[9px] tracking-[0.8px] text-[#c42fce]">LOW:75527</Value>
      </PanelHead>
      <BollChart />
      <TimeAxis />

      <Banner />
      <ContentTabs />
      <BottomBar />
      <NavBar />
    </main>
  );
}
